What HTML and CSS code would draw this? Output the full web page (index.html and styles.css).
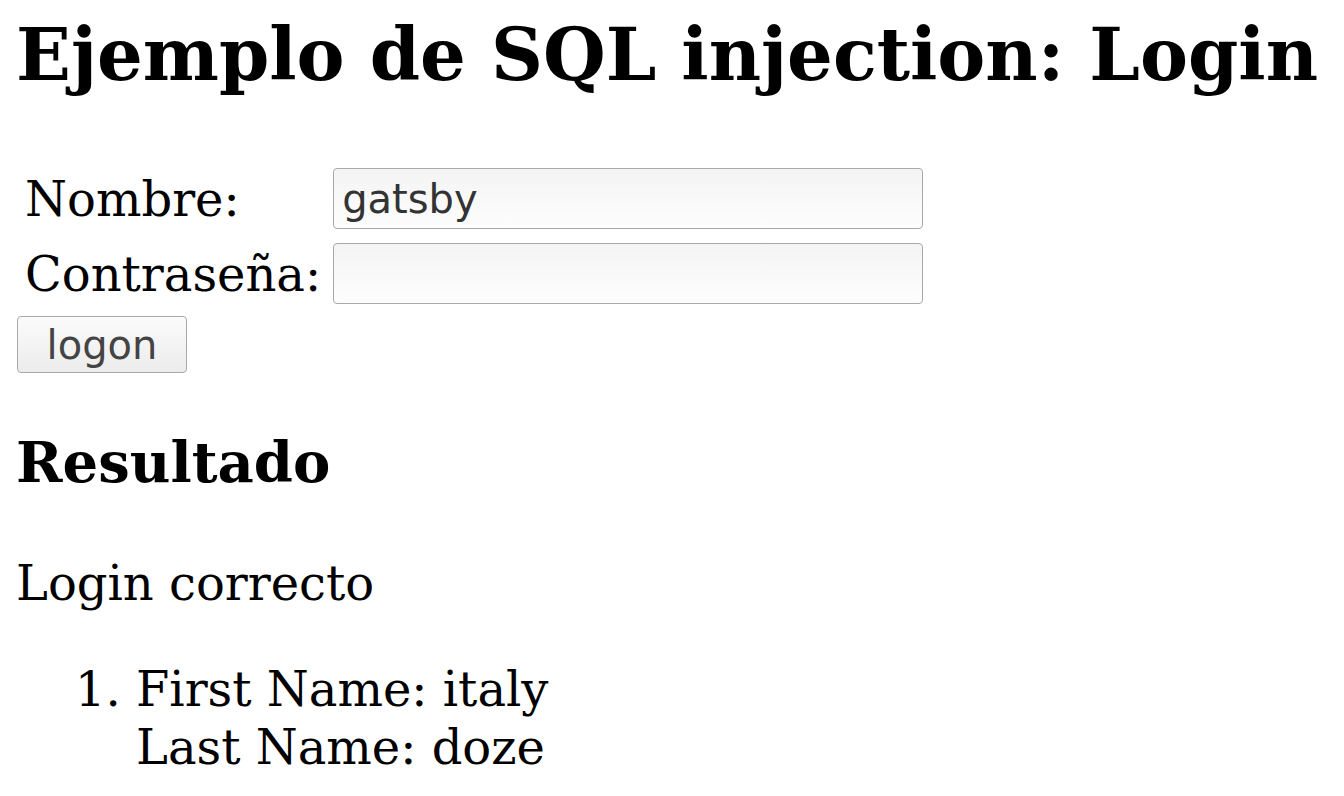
FILE: index.html
```html
<!DOCTYPE html>
<html lang="es">
<head>
<meta charset="utf-8">
<title>Ejemplo de SQL injection: Login</title>
<link rel="stylesheet" href="styles.css">
</head>
<body>
<h1 class="title">Ejemplo de SQL injection: Login</h1>
<form class="login-form">
  <table class="login-table">
    <tr>
      <td class="label">Nombre:</td>
      <td><input class="field" type="text" value="gatsby"></td>
    </tr>
    <tr>
      <td class="label">Contraseña:</td>
      <td><input class="field" type="password" value=""></td>
    </tr>
  </table>
  <button class="btn" type="button">logon</button>
</form>
<h2 class="subtitle">Resultado</h2>
<p class="result">Login correcto</p>
<ol class="users">
  <li>First Name: italy<br>Last Name: doze</li>
</ol>
</body>
</html>
```
FILE: styles.css
```css
html, body {
  background: #fff;
}
body {
  margin: 0;
  padding: 0 16px;
  font-family: "DejaVu Serif", serif;
  font-size: 48px;
  color: #000;
  overflow: hidden;
}
.title {
  font-size: 72px;
  font-weight: bold;
  margin: 12px 0 68px;
  white-space: nowrap;
  line-height: normal;
}
.login-form {
  margin: 0;
}
.login-table {
  border-spacing: 6px 8px;
  margin-left: -1px;
  margin-top: -8px;
}
.login-table td {
  padding: 3px;
}
.label {
  padding-left: 4px !important;
}
.field {
  box-sizing: border-box;
  width: 590px;
  height: 61px;
  border: 1px solid #a9a9a9;
  border-radius: 4px;
  background: linear-gradient(#f4f4f4, #fdfdfd);
  font-family: "DejaVu Sans", sans-serif;
  font-size: 40px;
  color: #333;
  padding: 0 8px;
  margin: 0;
  display: block;
}
.btn {
  box-sizing: border-box;
  width: 170px;
  height: 57px;
  border: 1px solid #a9a9a9;
  border-radius: 4px;
  background: linear-gradient(#fbfbfb, #ececec);
  font-family: "DejaVu Sans", sans-serif;
  font-size: 40px;
  color: #444;
  padding: 0;
  margin: 1px 0 0 1px;
  display: block;
}
.subtitle {
  font-size: 56px;
  font-weight: bold;
  margin: 56px 0 0;
}
.result {
  margin: 60px 0 0;
}
.users {
  margin: 49px 0 0;
  padding-left: 120px;
  line-height: 58px;
}
```
